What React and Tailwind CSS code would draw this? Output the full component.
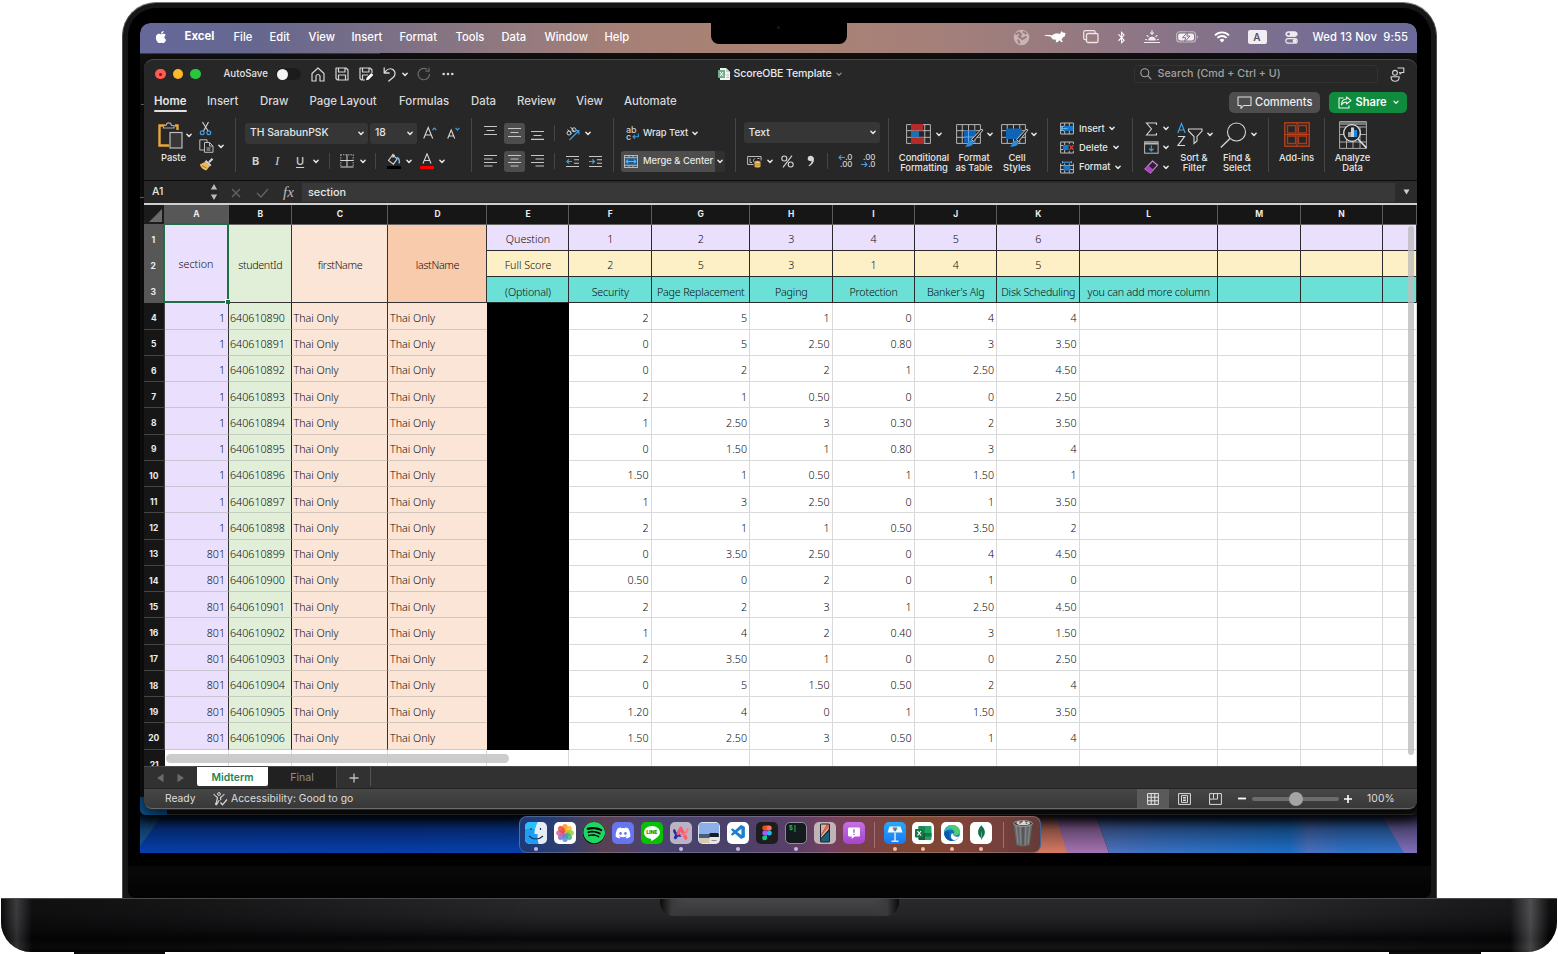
import React from "react";
import { FaApple, FaSpotify, FaDiscord, FaBluetoothB } from "react-icons/fa";
import { SiMongodb } from "react-icons/si";
import { VscVscode } from "react-icons/vsc";

const W = "#d6d6d6";
const B = "#3f9fe0";

function Svg({ w, h, children, className = "" }) {
  return (
    <svg width={w} height={h} viewBox={`0 0 ${w} ${h}`} fill="none" className={"block shrink-0 " + className}>
      {children}
    </svg>
  );
}

function Chev({ className = "", color = "#e4e4e4", s = 1.5 }) {
  return (
    <Svg w={6} h={5} className={className}>
      <path d="M.9 1.2 3 3.4 5.1 1.2" stroke={color} strokeWidth={s} strokeLinecap="round" strokeLinejoin="round" />
    </Svg>
  );
}

const Sep = () => <div className="h-[54px] w-px shrink-0 self-start bg-[#464646]" />;
const MiniSep = ({ className = "" }) => <div className={"h-[16px] w-px shrink-0 bg-[#464646] " + className} />;

/* ---------------- menu bar ---------------- */

function MenuBar() {
  return (
    <div className="flex h-[30px] shrink-0 items-center whitespace-nowrap rounded-t-[10px] bg-[linear-gradient(90deg,#65689a_0%,#66678f_9%,#7c7085_20%,#957a7e_30%,#a68076_38%,#ab8274_50%,#a58079_62%,#977a80_72%,#84728a_84%,#706c97_95%,#6b6a9a_100%)] pb-[2px] text-[11.2px] font-medium text-white">
      <FaApple className="ml-[14px] shrink-0" size={14} />
      <span className="ml-[16.500px] w-[49px] text-[11.4px] font-bold">Excel</span>
      <span className="w-[36px]">File</span>
      <span className="w-[39px]">Edit</span>
      <span className="w-[43px]">View</span>
      <span className="w-[48px]">Insert</span>
      <span className="w-[56px]">Format</span>
      <span className="w-[46px]">Tools</span>
      <span className="w-[43px]">Data</span>
      <span className="w-[60px]">Window</span>
      <span className="w-[60px]">Help</span>
      <div className="flex-1" />
      <Svg w={17} h={17}>
        <circle cx="8.5" cy="8.5" r="7.8" fill="#c9b3b3" />
        <path d="M2.500 5.500 6 3.500l2 2-2 2 3.500 2.500 4-2.500M10 2.500l3.500 2.500M5 10.500l1.500 4" stroke="#997a7c" strokeWidth="2" />
      </Svg>
      <Svg w={22} h={14} className="ml-[14px]">
        <path d="M0 5.200c3 .2 5-.6 8 .4 2-2 5-2.400 8-1.600L17.500 1l1.200 1.600L21.500 3l-.6 3.200-2.400 1.500-1 2.300 1.500 1.600-1.600.6-1.800-2-2.600 2.400-1.400-.8.8-2-3-.4C8 9.500 7.700 7.500 6.500 6.600 4 6 2 6.400 0 5.200z" fill="#fff" />
      </Svg>
      <Svg w={16} h={14} className="ml-[17px]">
        <rect x=".7" y=".7" width="11.500" height="9" rx="1.600" stroke="#efe6e8" strokeWidth="1.200" />
        <rect x="3.500" y="3.500" width="11.500" height="9" rx="1.600" fill="#9a7b80" stroke="#efe6e8" strokeWidth="1.300" />
      </Svg>
      <FaBluetoothB className="ml-[16px] shrink-0" size={13} />
      <Svg w={16} h={14} className="ml-[16px]">
        <path d="M.5 12.500h15M8 .5v3.500M6.600 2.800 8 4.200l1.400-1.400M1.500 9.500l1.300.3M14.500 9.500l-1.300.3M3 5.500l1.200 1M13 5.500l-1.200 1" stroke="#f2ebee" strokeWidth="1.100" strokeLinecap="round" />
        <path d="M4.200 10.500a3.800 3.800 0 0 1 7.600 0z" fill="#f2ebee" />
      </Svg>
      <Svg w={23} h={12} className="ml-[16px]">
        <rect x=".6" y=".8" width="19" height="10.200" rx="3" stroke="#c5bac4" strokeWidth="1.100" />
        <rect x="2.200" y="2.400" width="15.800" height="7" rx="1.800" fill="#f4eff2" />
        <path d="M21 4.200v3.400c1.300-.5 1.300-2.900 0-3.400z" fill="#c5bac4" />
        <path d="M12 .8 6.500 6.700h3.200L8.500 11l5.500-6h-3.200z" fill="#f4eff2" stroke="#86738a" strokeWidth="1" />
      </Svg>
      <Svg w={16} h={12} className="ml-[15px]">
        <path d="M1 4.300a10 10 0 0 1 14 0M3.400 6.900a6.500 6.500 0 0 1 9.200 0" stroke="#fff" strokeWidth="1.800" />
        <path d="M8 11.400 5.600 9a3.400 3.400 0 0 1 4.800 0z" fill="#fff" />
      </Svg>
      <div className="ml-[18px] flex h-[14px] w-[19px] items-center justify-center rounded-[2px] bg-[#f1edf2] text-[10px] font-semibold text-[#5c5068]">A</div>
      <Svg w={13} h={13} className="ml-[18px]">
        <rect x=".8" y=".8" width="11.400" height="4.600" rx="2.300" fill="#efeaf0" stroke="#efeaf0" />
        <circle cx="3.600" cy="3.100" r="1.400" fill="#77708f" />
        <rect x=".8" y="7.600" width="11.400" height="4.600" rx="2.300" stroke="#efeaf0" strokeWidth="1.200" />
        <circle cx="9.600" cy="9.900" r="2" fill="#efeaf0" />
      </Svg>
      <span className="ml-[15px] w-[104.500px] text-[11.2px] tracking-[0.14px]">Wed 13 Nov&nbsp; 9:55</span>
    </div>
  );
}

/* ---------------- title bar ---------------- */

function TitleBar() {
  return (
    <div className="flex h-[28px] shrink-0 items-center whitespace-nowrap text-[#e4e4e4]">
      <div className="ml-[11px] flex gap-[7px]">
        <div className="flex size-[10.500px] items-center justify-center rounded-full bg-[#ff5b55]">
          <div className="size-[3px] rounded-full bg-[#8f100c]" />
        </div>
        <div className="size-[10.500px] rounded-full bg-[#fdb92b]" />
        <div className="size-[10.500px] rounded-full bg-[#29c73f]" />
      </div>
      <span className="ml-[23px] w-[52px] text-[9.700px] font-medium">AutoSave</span>
      <div className="flex h-[12px] w-[25px] items-center rounded-full bg-[#1c1c1c] px-[1px]">
        <div className="size-[11px] rounded-full bg-[#f4f4f4]" />
      </div>
      <Svg w={14} h={15} className="ml-[10px]">
        <path d="M1 6.500 7 1l6 5.500V14H9V9.500a2 2 0 0 0-4 0V14H1z" stroke={W} strokeWidth="1.200" strokeLinejoin="round" />
      </Svg>
      <Svg w={14} h={14} className="ml-[10px]">
        <path d="M1 1h10l2 2v10H2.500L1 11.500zM3.500 1v4h6.500V1M3.500 13V8h7v5" stroke={W} strokeWidth="1.200" strokeLinejoin="round" />
      </Svg>
      <Svg w={15} h={14} className="ml-[10px]">
        <path d="M6 13H2.500L1 11.500V1h10l2 2v3M3.500 1v4H10V1M3.500 13V8H9" stroke={W} strokeWidth="1.200" strokeLinejoin="round" />
        <path d="m7 13.300.6-2.600L12.300 6l2 2-4.700 4.700z" fill="#fff" />
      </Svg>
      <Svg w={13} h={15} className="ml-[9px]">
        <path d="M1.200 1v5h5M1.500 5.800C3.500 2.500 7 .8 10 2.600c3 2 2.400 5.600.3 7.600L5.800 14" stroke={W} strokeWidth="1.300" strokeLinecap="round" strokeLinejoin="round" />
      </Svg>
      <Chev className="ml-[6px]" />
      <Svg w={14} h={14} className="ml-[9px]">
        <path d="M12.500 7A5.700 5.700 0 1 1 10 2.300M12 .8v3.400H8.500" stroke="#6c6c6c" strokeWidth="1.200" />
      </Svg>
      <Svg w={12} h={4} className="ml-[11px]">
        <circle cx="1.700" cy="2" r="1.300" fill={W} /><circle cx="6" cy="2" r="1.300" fill={W} /><circle cx="10.300" cy="2" r="1.300" fill={W} />
      </Svg>
      <Svg w={12} h={14} className="ml-[264px]">
        <path d="M2 1h6l4 4v8H2z" fill="#f2f4f2" />
        <path d="M8 1v4h4z" fill="#c9d4cc" />
        <rect x="0" y="3" width="7" height="8" rx=".8" fill="#6fae88" />
        <path d="m2 5 3 4M5 5 2 9" stroke="#fff" strokeWidth="1" />
        <path d="M8.500 8h2.500M8.500 10.500h2.500" stroke="#9cc7ac" />
      </Svg>
      <span className="ml-[4px] w-[101px] text-[10.600px] font-medium tracking-[-0.140px] text-[#e8e8e8]">ScoreOBE Template</span>
      <Chev color="#9a9a9a" s={1.1} className="ml-[1px]" />
      <div className="ml-[292px] flex h-[18px] w-[244px] items-center rounded-[4px] border border-[#333] pl-[5px]">
        <Svg w={12} h={12}>
          <circle cx="4.800" cy="4.800" r="4" stroke="#a5a5a5" strokeWidth="1.100" /><path d="m7.700 7.700 3.600 3.600" stroke="#a5a5a5" strokeWidth="1.200" />
        </Svg>
        <span className="ml-[6px] mt-[1px] text-[10.700px] font-medium tracking-[0.03px] text-[#a2a2a2]">Search (Cmd + Ctrl + U)</span>
      </div>
      <Svg w={15} h={15} className="ml-[12px]">
        <circle cx="5" cy="5.800" r="2.400" stroke={W} strokeWidth="1.100" />
        <path d="M1 9.800h8.200c0 6-8.200 6-8.200 0zM7.500 1h6.300v4.500h-2.300L10 7V5.500H9" stroke={W} strokeWidth="1.100" strokeLinejoin="round" />
      </Svg>
    </div>
  );
}

function RibbonTabs() {
  return (
    <div className="flex h-[28px] shrink-0 items-center whitespace-nowrap text-[11.400px] font-medium text-[#d8d8d8]">
      <div className="ml-[10px] flex h-full w-[53px] flex-col items-start">
        <span className="mt-[4px] h-[18px] leading-[18px] font-semibold text-[#e6e6e6]">Home</span>
        <div className="h-[2px] w-[33px] rounded-full bg-[#e0e0e0]" />
      </div>
      <div className="flex h-full items-start pt-[4px] leading-[18px]">
        <span className="w-[53px]">Insert</span>
        <span className="w-[49.500px]">Draw</span>
        <span className="w-[89.500px]">Page Layout</span>
        <span className="w-[72px]">Formulas</span>
        <span className="w-[46px]">Data</span>
        <span className="w-[59px]">Review</span>
        <span className="w-[48px]">View</span>
        <span className="w-[100px]">Automate</span>
      </div>
      <div className="ml-[504.500px] mt-[1px] flex h-[21px] w-[91px] items-center rounded-[5px] bg-[#4e4e4e] pl-[8px] text-[11.100px] text-[#f0f0f0]">
        <Svg w={15} h={14}>
          <path d="M1 1h13v8.500H6.500L4 12.500v-3H1z" stroke="#ddd" strokeWidth="1.100" strokeLinejoin="round" />
        </Svg>
        <span className="ml-[3.500px]">Comments</span>
      </div>
      <div className="ml-[9px] mt-[1px] flex h-[21px] w-[78px] items-center rounded-[5px] bg-[#108a3d] pl-[9px] text-[11.100px] font-semibold text-white">
        <Svg w={14} h={13}>
          <path d="M5.500 2H1v10h10V9.500M8.500 1l4.500 3.500L8.500 8V6C6 6 4.500 7 3.500 9 3.500 5.500 5 3.300 8.500 3z" stroke="#e8f6ec" strokeWidth="1.100" strokeLinejoin="round" />
        </Svg>
        <span className="ml-[4px] w-[37px]">Share</span>
        <Chev s={1.1} color="#fff" />
      </div>
    </div>
  );
}

/* ---------------- ribbon ---------------- */

function Lines({ rows }) {
  return (
    <Svg w={14} h={14}>
      {rows.map(([x1, x2, y], i) => (
        <path key={i} d={`M${x1} ${y}H${x2}`} stroke="#c6c6c6" strokeWidth="1.100" />
      ))}
    </Svg>
  );
}

const GridBase = ({ w = 25, h = 20 }) => (
  <path d={`M.6.6h${w - 1.2}v${h - 1.2}H.6zM.6 ${h / 3}h${w - 1.2}M.6 ${(h * 2) / 3}h${w - 1.2}M${w / 4} .6v${h - 1.2}M${w / 2} .6v${h - 1.2}M${(w * 3) / 4} .6v${h - 1.2}`} stroke="#b4b4b4" strokeWidth="1" />
);

const Brush = () => (
  <g>
    <path d="m27 6-9.500 11.500-2-2L25 5.300z" fill="#272727" stroke="#c8c8c8" strokeWidth="1" />
    <path d="M15.500 16.500c2 .6 2.300 2.500 1.200 4-1.500 2-5 2.600-8.200 1.800 2-.8 2.300-1.500 3-3.300.6-1.600 2-3 4-2.500z" fill="#2a8fdc" />
  </g>
);

function TableGlyph({ kind }) {
  return (
    <Svg w={14} h={13}>
      <path d="M.6 1h12.800v11H.6zM.6 4.500h12.800M.6 8.500h12.800M4.700 1v11M9.300 1v11" stroke="#b9b9b9" strokeWidth="1" />
      {kind === "insert" && <g><rect x="4" y="4" width="9" height="5" fill="#1877c9" /><path d="M7.500 6.500h-6M3.800 4 1.200 6.500 3.800 9" stroke="#5db7f2" strokeWidth="1.200" /></g>}
      {kind === "delete" && <g><rect x="3" y="4" width="6" height="5" fill="#1877c9" /><rect x="8.500" y="3" width="5.500" height="7" fill="#272727" /><path d="m9.500 4.200 4 4.600M13.500 4.200l-4 4.600" stroke="#e0443e" strokeWidth="1.200" /></g>}
      {kind === "format" && <g><rect x="0" y="0" width="14" height="2.500" fill="#272727" /><rect x="3.500" y="4.500" width="7" height="5" fill="#1877c9" /><path d="M2 1.200h10M2.500 0v2.400M11.500 0v2.400" stroke="#4aa9ea" /></g>}
    </Svg>
  );
}

const CellRow = ({ kind, children, width }) => (
  <div className="flex h-[19.300px] items-center">
    <TableGlyph kind={kind} />
    <span className={"ml-[5px] " + width}>{children}</span>
    <Chev />
  </div>
);

function Ribbon() {
  return (
    <div className="flex h-[64px] shrink-0 items-start whitespace-nowrap pt-[2px] text-[9.400px] font-medium text-[#e6e6e6]">
      {/* clipboard */}
      <div className="flex h-[56px] w-[91px] shrink-0">
        <div className="ml-[14px] mt-[4px] w-[40px]">
          <div className="flex items-center">
            <Svg w={25} h={27}>
              <path d="M7 3.500H1.500v20H11M17 3.500h2.500V8" stroke="#e9a63c" strokeWidth="2.400" />
              <path d="M5.500 6V3.500h2.500c.5-3.500 5-3.500 5.500 0H16V6z" stroke="#a9a9a9" strokeWidth="1.200" fill="#272727" />
              <rect x="12" y="10.500" width="12" height="15.500" fill="#373737" stroke="#bdbdbd" strokeWidth="1.200" />
            </Svg>
            <Chev className="ml-[3px] mt-[-1px]" />
          </div>
          <div className="mt-[3px] w-[31px] text-center leading-[12px]">Paste</div>
        </div>
        <div className="ml-[1px] mt-[1px] flex flex-col">
          <div className="flex h-[19px] items-center">
            <Svg w={14} h={15}>
              <path d="M3.500 1 9 10M9.500 1 4.500 10" stroke={W} strokeWidth="1.100" />
              <circle cx="3.200" cy="11.800" r="1.900" stroke={B} strokeWidth="1.200" /><circle cx="9.800" cy="11.800" r="1.900" stroke={B} strokeWidth="1.200" />
            </Svg>
          </div>
          <div className="flex h-[19px] items-center">
            <Svg w={15} h={14}>
              <path d="M5 11H.8V.8H5l3 0V3M5.500 3.500h5L14 7v6.300H5.500zM10.500 3.500V7H14M7.500 9h4M7.500 11h4" stroke="#bdbdbd" strokeWidth="1" />
            </Svg>
            <Chev className="ml-[4px]" />
          </div>
          <div className="flex h-[19px] items-center">
            <Svg w={15} h={13}>
              <path d="M13.500.8 10 4.200M6.500 2.800l5.200 5" stroke={W} strokeWidth="2" />
              <path d="M6.300 3.800.8 6.500c1 3 3.500 5.500 6.500 6L10.800 8z" fill="#eeb85a" />
              <path d="m3 7.500 4.500 2.500" stroke="#8a6420" strokeWidth=".8" />
            </Svg>
          </div>
        </div>
      </div>
      <Sep />
      {/* font */}
      <div className="flex h-[56px] w-[235px] shrink-0 flex-col pl-[9px]">
        <div className="mt-[4px] flex h-[22px] items-center text-[10.300px]">
          <div className="flex h-[21px] w-[123px] items-center rounded-[3px] bg-[#363636] pl-[5px]">
            <span className="w-[108px]">TH SarabunPSK</span>
            <Chev />
          </div>
          <div className="ml-[2px] flex h-[21px] w-[47px] items-center rounded-[3px] bg-[#363636] pl-[5px]">
            <span className="w-[32px]">18</span>
            <Chev />
          </div>
          <Svg w={14} h={14} className="ml-[6px]">
            <path d="M.7 12.500 5.200 1.500l4.500 11M2.200 9h6" stroke={W} strokeWidth="1.100" />
            <path d="m9.500 4 1.900-2 1.900 2" stroke={B} strokeWidth="1.100" />
          </Svg>
          <Svg w={14} h={14} className="ml-[10px]">
            <path d="M.7 12.500 4.200 4l3.500 8.500M2 10h4.500" stroke={W} strokeWidth="1.100" />
            <path d="m8.500 2 1.900 2 1.900-2" stroke={B} strokeWidth="1.100" />
          </Svg>
        </div>
        <div className="mt-[6px] flex h-[22px] items-center text-[11px] text-[#cfcfcf]">
          <span className="ml-[7px] w-[22px] font-bold">B</span>
          <span className="w-[22px] pl-[1px] font-['Liberation_Serif',serif] text-[13px] italic">I</span>
          <span className="w-[15px] underline underline-offset-2">U</span>
          <Chev className="ml-[2px]" />
          <MiniSep className="ml-[10px]" />
          <Svg w={14} h={14} className="ml-[10px]">
            <path d="M.8.5v12M13.200.5v12M.5.8h13" stroke="#aaa" strokeDasharray="1.500 1" />
            <path d="M7 .5v12M.5 6.500h13M.5 13h13" stroke={W} />
          </Svg>
          <Chev className="ml-[6px]" />
          <MiniSep className="ml-[9px]" />
          <Svg w={14} h={16} className="ml-[11px]">
            <path d="M5.500 2 1.500 7.500l4.800 3.700 4-5.400zM5.500 2l2.500.3M6 .8v4" stroke={W} strokeWidth="1.100" />
            <path d="M10 4.500c2 .5 2.600 3 2.200 6" stroke="#6bb5ea" strokeWidth="1.600" />
            <rect x="0" y="13" width="14" height="3" fill="#000" />
          </Svg>
          <Chev className="ml-[5px]" />
          <Svg w={14} h={16} className="ml-[8px]">
            <path d="m3 10.500 4-9.700 4 9.700M4.300 7.500h5.500" stroke={W} strokeWidth="1.100" />
            <rect x="0" y="13" width="14" height="3" fill="#f60000" />
          </Svg>
          <Chev className="ml-[5px]" />
        </div>
      </div>
      <Sep />
      {/* alignment */}
      <div className="flex h-[56px] w-[141px] shrink-0 flex-col pl-[12px]">
        <div className="mt-[4px] flex h-[22px] items-center">
          <Lines rows={[[0, 13, 0.5], [2.5, 10.5, 4.5], [0, 13, 8.5]]} />
          <div className="ml-[6px] flex h-[21px] w-[21px] items-center justify-center rounded-[3px] bg-[#4d4d4d]"><Lines rows={[[0, 13, 2.5], [2.5, 10.5, 6.5], [0, 13, 10.5]]} /></div>
          <span className="ml-[6px]"><Lines rows={[[0, 13, 5.5], [2.5, 10.5, 9.5], [0, 13, 13.400]]} /></span>
          <MiniSep className="ml-[9px]" />
          <Svg w={16} h={15} className="ml-[10px]">
            <g stroke={W} strokeWidth="1"><circle cx="4" cy="7" r="2" /><path d="m2.500 3.500 4 4M5.500 1l4 4.500" /><circle cx="9" cy="3.800" r="2" /></g>
            <path d="m4.500 14 9-9M9.800 4.600h4v4" stroke={B} strokeWidth="1.200" />
          </Svg>
          <Chev className="ml-[4px]" />
        </div>
        <div className="mt-[6px] flex h-[22px] items-center">
          <Lines rows={[[0, 13, 1.5], [0, 8.5, 5], [0, 13, 8.5], [0, 8.5, 12]]} />
          <div className="ml-[6px] flex h-[21px] w-[21px] items-center justify-center rounded-[3px] bg-[#4d4d4d]"><Lines rows={[[0, 13, 1.5], [2.5, 10.5, 5], [0, 13, 8.5], [2.5, 10.5, 12]]} /></div>
          <span className="ml-[6px]"><Lines rows={[[0, 13, 1.5], [4.5, 13, 5], [0, 13, 8.5], [4.5, 13, 12]]} /></span>
          <MiniSep className="ml-[9px]" />
          <Svg w={14} h={13} className="ml-[11px]">
            <path d="M0 1.500h13M8 4.800h5M8 8.200h5M0 11.500h13" stroke="#c6c6c6" strokeWidth="1.100" />
            <path d="M6 6.500H.8M3 4.300.8 6.500 3 8.700" stroke={B} strokeWidth="1.200" />
          </Svg>
          <Svg w={14} h={13} className="ml-[9px]">
            <path d="M0 1.500h13M8 4.800h5M8 8.200h5M0 11.500h13" stroke="#c6c6c6" strokeWidth="1.100" />
            <path d="M0 6.500h5.500M3.300 4.300l2.200 2.200-2.200 2.200" stroke={B} strokeWidth="1.200" />
          </Svg>
        </div>
      </div>
      <Sep />
      {/* wrap, merge */}
      <div className="flex h-[56px] w-[121px] shrink-0 flex-col pl-[7px]">
        <div className="mt-[4px] flex h-[22px] items-center">
          <div className="ml-[5px] flex w-[13px] flex-col text-[9px] text-[#cfcfcf]">
            <span className="h-[7px] leading-[7px]">ab</span>
            <span className="flex h-[8px] items-center leading-[7px]">c
              <Svg w={7} h={7} className="ml-[1px]"><path d="M6.300.5v3.300H1M3 1.800 1 3.800l2 2" stroke={B} strokeWidth="1.100" /></Svg>
            </span>
          </div>
          <span className="ml-[4px] w-[49px] tracking-[-0.05px]">Wrap Text</span>
          <Chev />
        </div>
        <div className="mt-[6px] flex h-[22px] items-center">
          <div className="flex h-[21px] w-[94px] items-center rounded-l-[3px] bg-[#4d4d4d] pl-[3px]">
            <Svg w={14} h={13}>
              <rect x=".5" y=".5" width="13" height="12" stroke="#b9b9b9" /><rect x="1" y="3" width="12" height="7" fill="#1d5d92" />
              <path d="M1 2.700h12M1 10.300h12M5 .5v2M9 .5v2M5 10.500v2M9 10.500v2" stroke="#b9b9b9" />
              <path d="M2 6.500h10M4 4.700 2.200 6.500 4 8.300M10 4.700l1.800 1.800L10 8.300" stroke="#5cb4f2" strokeWidth="1.100" />
            </Svg>
            <span className="ml-[5px]">Merge &amp; Center</span>
          </div>
          <div className="flex h-[21px] w-[10px] items-center justify-center rounded-r-[3px] bg-[#303030]"><Chev /></div>
        </div>
      </div>
      <Sep />
      {/* number */}
      <div className="flex h-[56px] w-[152px] shrink-0 flex-col pl-[7.500px]">
        <div className="mt-[4px] flex h-[21px] w-[136px] items-center rounded-[3px] bg-[#363636] pl-[5px] text-[10.300px]">
          <span className="w-[121px]">Text</span>
          <Chev />
        </div>
        <div className="mt-[7px] flex h-[22px] items-center">
          <Svg w={15} h={13} className="ml-[3px]">
            <path d="M.6 1.500h13.500v4M.6 1.500v8h6M3 3.500v4h2M8 3.500c-2 .5-2 3.500 0 4M10.500 3.500h2" stroke="#bdbdbd" />
            <path d="M7.500 7.200v4.300c0 1.300 6 1.300 6 0V7.200" fill="#eeb85a" /><ellipse cx="10.500" cy="7.200" rx="3" ry="1.300" fill="#f4cf86" stroke="#8a6420" strokeWidth=".5" /><path d="M7.500 9.500c.5 1 5.500 1 6 0" stroke="#8a6420" strokeWidth=".7" />
          </Svg>
          <Chev className="ml-[5px]" />
          <Svg w={13} h={13} className="ml-[8px]">
            <circle cx="3.300" cy="3.500" r="2.500" stroke={W} strokeWidth="1.100" /><circle cx="9.700" cy="9.500" r="2.500" stroke={W} strokeWidth="1.100" /><path d="M11 .6 2 12.400" stroke={W} strokeWidth="1.100" />
          </Svg>
          <Svg w={8} h={12} className="ml-[13px]">
            <path d="M3.500.8A2.700 2.700 0 0 0 3.200 6.200c.6 0 1-.1 1.500-.4-.3 2-1.400 3.500-3.200 4.600l.7.900C5 10 7 7.500 7 4.500 7 2 5.600.8 3.500.8z" fill={W} />
          </Svg>
          <MiniSep className="ml-[12px]" />
          <div className="ml-[11px] flex w-[14px] flex-col items-end text-[8px] leading-[7.500px] text-[#cfcfcf]">
            <span className="flex items-center"><Svg w={7} h={7}><path d="M7 3.500H1M3.300 1.200 1 3.500l2.300 2.300" stroke={B} strokeWidth="1.100" /></Svg>.0</span>
            <span>.00</span>
          </div>
          <div className="ml-[9px] flex w-[14px] flex-col items-end text-[8px] leading-[7.500px] text-[#cfcfcf]">
            <span>.00</span>
            <span className="flex items-center"><Svg w={7} h={7}><path d="M0 3.500h6M3.700 1.200 6 3.500 3.700 5.800" stroke={B} strokeWidth="1.100" /></Svg>.0</span>
          </div>
        </div>
      </div>
      <Sep />
      {/* styles */}
      <div className="flex h-[60px] w-[158px] shrink-0 text-center leading-[10.500px]">
        <div className="ml-[8px] mt-[6px] w-[54px]">
          <div className="flex h-[28.500px] items-start pl-[9px]">
            <Svg w={25} h={20}>
              <GridBase />
              <rect x="5" y="0" width="12" height="6.500" fill="#b22a2a" /><rect x="5" y="7" width="8" height="6" fill="#1e6fb0" /><rect x="5" y="13.500" width="13" height="6.500" fill="#b22a2a" />
            </Svg>
            <Chev className="ml-[5px] mt-[8px]" />
          </div>
          <div className="-mx-[4px] tracking-[-0.05px]">Conditional<br />Formatting</div>
        </div>
        <div className="mt-[6px] w-[46px]">
          <div className="flex h-[28.500px] items-start pl-[5px]">
            <Svg w={28} h={24}><GridBase /><rect x="8" y="6.500" width="12" height="12" fill="#0f64b8" /><path d="M12.500 6.500v12M8 13h12" stroke="#79b8ec" strokeWidth=".8" /><Brush /></Svg>
            <Chev className="ml-[3px] mt-[8px]" />
          </div>
          <div className="tracking-[-0.05px]">Format<br />as Table</div>
        </div>
        <div className="ml-[1px] mt-[6px] w-[38px]">
          <div className="flex h-[28.500px] items-start pl-[3px]">
            <Svg w={28} h={24}><GridBase /><rect x="5" y="4.500" width="16" height="10.500" fill="#0f64b8" /><Brush /></Svg>
            <Chev className="ml-[2px] mt-[8px]" />
          </div>
          <div>Cell<br />Styles</div>
        </div>
      </div>
      <Sep />
      {/* cells */}
      <div className="flex h-[60px] w-[84px] shrink-0 flex-col pl-[12px] pt-[1px]">
        <CellRow kind="insert" width="w-[30px]">Insert</CellRow>
        <CellRow kind="delete" width="w-[34px]">Delete</CellRow>
        <CellRow kind="format" width="w-[36px]">Format</CellRow>
      </div>
      <Sep />
      {/* editing */}
      <div className="flex h-[60px] w-[135px] shrink-0">
        <div className="flex w-[38px] flex-col pl-[11px] pt-[1px]">
          <div className="flex h-[19.300px] items-center">
            <Svg w={15} h={14}><path d="M12.500 3V1H2.500l5 6-5 6h10v-2" stroke={W} strokeWidth="1.100" /></Svg>
            <Chev className="ml-[4px]" />
          </div>
          <div className="flex h-[19.300px] items-center">
            <Svg w={15} h={13}><rect x=".6" y=".8" width="13.500" height="11.400" stroke="#b9b9b9" /><path d="M1 2.500h13" stroke="#b9b9b9" strokeWidth="2" /><path d="M7.300 4.500v5.500M5 7.700l2.300 2.300 2.300-2.300" stroke={B} strokeWidth="1.200" /></Svg>
            <Chev className="ml-[4px]" />
          </div>
          <div className="flex h-[19.300px] items-center">
            <Svg w={15} h={14}><path d="M8.500 1 13.500 5l-7 8-5.500-4z" stroke="#d28ce0" strokeWidth="1.100" /><path d="m4 5.500 5.500 4-3 3.500L1 9z" fill="#b03fc4" /></Svg>
            <Chev className="ml-[4px]" />
          </div>
        </div>
        <div className="ml-[4px] mt-[4px] w-[40px] text-center leading-[10.500px]">
          <div className="flex h-[30.500px] items-start pl-[2px]">
            <Svg w={26} h={26}>
              <path d="M.8 11 4.500 1.500 8.200 11M2 8h5" stroke={B} strokeWidth="1.200" />
              <path d="M1 14.500h6.500L1 23.500h7" stroke={W} strokeWidth="1.200" />
              <path d="M11.500 7h13.500v2L20 14.500V19l-3 2.500v-7L11.500 9z" stroke={W} strokeWidth="1.100" />
            </Svg>
            <Chev className="ml-[4px] mt-[10px]" />
          </div>
          <div className="pr-[2px]">Sort &amp;<br />Filter</div>
        </div>
        <div className="ml-[4px] mt-[4px] w-[42px] text-center leading-[10.500px]">
          <div className="flex h-[30.500px] items-start pl-[1px]">
            <Svg w={27} h={26}><circle cx="16.500" cy="10" r="9" stroke={W} strokeWidth="1.100" /><path d="M10 16.500.8 25.500" stroke={W} strokeWidth="1.300" /></Svg>
            <Chev className="ml-[4px] mt-[10px]" />
          </div>
          <div className="pr-[6px]">Find &amp;<br />Select</div>
        </div>
      </div>
      <Sep />
      <div className="mt-[4px] flex h-[52px] w-[55px] shrink-0 flex-col items-center leading-[10.500px]">
        <Svg w={26} h={25}>
          <rect x=".8" y=".8" width="24.400" height="23.400" stroke="#c2421a" strokeWidth="1.300" />
          <path d="M3.500 3.500h8v7.500h-8zM14.500 3.500h8v7.500h-8zM3.500 14h8v7.500h-8zM14.500 14h8v7.500h-8z" stroke="#a83b1b" strokeWidth="1.300" />
          <path d="M13 1v23M1 12.500h24" stroke="#c2421a" strokeWidth="1" />
        </Svg>
        <div className="mt-[6px] tracking-[-0.1px]">Add-ins</div>
      </div>
      <Sep />
      <div className="mt-[3px] flex h-[52px] w-[55px] shrink-0 flex-col items-center text-center leading-[10.500px]">
        <Svg w={28} h={28}>
          <path d="M.6.6h26.800v26.800H.6zM.6 6h26.800M.6 13.500h26.800M.6 21h26.800M7.500 6v21M14 6v21M21 6v21" stroke="#aaa" strokeWidth="1" />
          <rect x="1" y="1" width="26" height="3" fill="#777" />
          <circle cx="13" cy="12" r="8.300" fill="#242424" stroke="#dedede" strokeWidth="1.300" />
          <path d="m19 18 8.500 9" stroke="#dedede" strokeWidth="1.600" />
          <rect x="9" y="11" width="3" height="5" fill="#9a9a9a" /><rect x="12" y="6.500" width="3" height="9.500" fill="#d0d0d0" /><rect x="15" y="9" width="3" height="7" fill="#1b87dc" />
        </Svg>
        <div className="mt-[3.500px] tracking-[-0.1px]">Analyze<br />Data</div>
      </div>
    </div>
  );
}

function FormulaBar() {
  return (
    <div className="flex h-[25px] shrink-0 items-center whitespace-nowrap border-b-2 border-t border-b-[#cfcfcf] border-t-[#0c0c0c] bg-[#2b2b2b] text-[10.900px] font-medium text-[#e6e6e6]">
      <div className="flex h-full w-[75px] items-center bg-[#262626] pl-[8px]">
        <span className="w-[58px] text-[10.500px]">A1</span>
        <Svg w={8} h={18}><path d="M4 1 7.200 6.500H.8zM4 17 .8 11.500h6.400z" fill="#b9b9b9" /></Svg>
      </div>
      <Svg w={10} h={10} className="ml-[12px] mt-[2px]"><path d="m1 1 8 8M9 1 1 9" stroke="#606060" strokeWidth="1.500" /></Svg>
      <Svg w={13} h={10} className="ml-[15px] mt-[2px]"><path d="m1 5 4 4 7-8" stroke="#606060" strokeWidth="1.500" /></Svg>
      <span className="ml-[14px] w-[19px] font-['Liberation_Serif',serif] text-[15px] italic text-[#bdbdbd]">fx</span>
      <div className="flex h-[19px] flex-1 items-center bg-[#383838] pl-[6px]">section</div>
      <div className="flex w-[22px] justify-center"><Svg w={7} h={6}><path d="M.5.5h6l-3 5z" fill="#cfcfcf" /></Svg></div>
    </div>
  );
}

/* ---------------- sheet ---------------- */

const COLS = "grid-cols-[20.500px_64px_63.500px_96px_99px_82px_82.500px_98.500px_82.500px_82px_82.500px_82.500px_138.500px_82.500px_82px_34px]";
const LETTERS = ["A", "B", "C", "D", "E", "F", "G", "H", "I", "J", "K", "L", "M", "N", ""];

const DATA = [
  ["1", "640610890", "2", "5", "1", "0", "4", "4"],
  ["1", "640610891", "0", "5", "2.50", "0.80", "3", "3.50"],
  ["1", "640610892", "0", "2", "2", "1", "2.50", "4.50"],
  ["1", "640610893", "2", "1", "0.50", "0", "0", "2.50"],
  ["1", "640610894", "1", "2.50", "3", "0.30", "2", "3.50"],
  ["1", "640610895", "0", "1.50", "1", "0.80", "3", "4"],
  ["1", "640610896", "1.50", "1", "0.50", "1", "1.50", "1"],
  ["1", "640610897", "1", "3", "2.50", "0", "1", "3.50"],
  ["1", "640610898", "2", "1", "1", "0.50", "3.50", "2"],
  ["801", "640610899", "0", "3.50", "2.50", "0", "4", "4.50"],
  ["801", "640610900", "0.50", "0", "2", "0", "1", "0"],
  ["801", "640610901", "2", "2", "3", "1", "2.50", "4.50"],
  ["801", "640610902", "1", "4", "2", "0.40", "3", "1.50"],
  ["801", "640610903", "2", "3.50", "1", "0", "0", "2.50"],
  ["801", "640610904", "0", "5", "1.50", "0.50", "2", "4"],
  ["801", "640610905", "1.20", "4", "0", "1", "1.50", "3.50"],
  ["801", "640610906", "1.50", "2.50", "3", "0.50", "1", "4"],
];

const HEAD = [
  { bg: "bg-[#ebdffe]", cells: ["Question", "1", "2", "3", "4", "5", "6", "", "", "", ""] },
  { bg: "bg-[#fef0c6]", cells: ["Full Score", "2", "5", "3", "1", "4", "5", "", "", "", ""] },
  { bg: "bg-[#6be0d6] tracking-[-0.180px]", cells: ["(Optional)", "Security", "Page Replacement", "Paging", "Protection", "Banker's Alg", "Disk Scheduling", "you can add more column", "", "", ""] },
];

const rowHead = "flex items-center justify-center font-['Inter',sans-serif] text-[8.500px] font-bold text-[#ececec] pt-[5px]";

function Sheet() {
  return (
    <div className="relative h-[561px] shrink-0 overflow-hidden bg-white font-['Noto_Sans',sans-serif] text-[10.700px] font-light text-[#0c0c0c]">
      <div className={"grid h-[19.500px] " + COLS}>
        <div className="flex items-end justify-end border-r border-b border-[#555] bg-[#1b1b1b] p-[2px]">
          <Svg w={13} h={13}><path d="M13 0v13H0z" fill="#6a6a6a" /></Svg>
        </div>
        {LETTERS.map((l, i) => (
          <div key={i} className={"flex items-center justify-center border-r border-[#5a5a5a] pl-[1px] pt-px font-['Inter',sans-serif] text-[8.500px] font-bold text-[#ececec] " + (i === 0 ? "bg-[#575757] border-b-2 border-b-[#1d7044]" : "bg-[#161616] border-b border-b-[#666]")}>{l}</div>
        ))}
      </div>
      <div className={"grid grid-rows-[26.250px_26.250px_26.250px] whitespace-nowrap " + COLS}>
        <div className="row-span-3 grid grid-rows-3 border-r-2 border-[#1d7044] bg-[#575757]">
          <div className={rowHead}>1</div><div className={rowHead}>2</div><div className={rowHead}>3</div>
        </div>
        <div className="relative row-span-3 flex items-center justify-center border-b-2 border-r-2 border-[#1d7044] bg-[#ebdffe] pl-[1px] pt-[3px]">
          section
          <div className="absolute -bottom-[3px] -right-[3px] size-[5px] border-l border-t border-white bg-[#1d7044]" />
        </div>
        <div className="row-span-3 flex items-center justify-center border-b border-r border-[#333] bg-[#e1efd9] pl-[1px] pt-[3px] tracking-[-0.350px]">studentId</div>
        <div className="row-span-3 flex items-center justify-center border-b border-r border-[#333] bg-[#fbe5d6] pl-[1px] pt-[3px] tracking-[-0.350px]">firstName</div>
        <div className="row-span-3 flex items-center justify-center border-b border-r border-[#333] bg-[#f7cbac] pl-[1px] pt-[3px] tracking-[-0.300px]">lastName</div>
        {HEAD.map((r) => r.cells.map((c, i) => (
          <div key={r.bg + i} className={"flex items-center justify-center overflow-hidden border-b border-r border-[#2a2a2a] pl-[1px] pt-[4px] " + r.bg}>{c}</div>
        )))}
      </div>
      {DATA.map((r, ri) => (
        <div key={ri} className={"grid h-[26.250px] whitespace-nowrap " + COLS}>
          <div className={rowHead + " border-b border-r border-[#444] bg-[#161616]"}>{ri + 4}</div>
          <div className="flex items-center justify-end border-b border-r border-b-[#c9c4d2] border-r-[#333] bg-[#ebdffe] pr-[2.500px] pt-[4px]">{r[0]}</div>
          <div className="flex items-center border-b border-r border-b-[#c4cbbf] border-r-[#222] bg-[#e1efd9] pl-[1.500px] pt-[4px]">{r[1]}</div>
          <div className="flex items-center border-b border-r border-b-[#d5c6bc] border-r-[#333] bg-[#fbe5d6] pl-[1.500px] pt-[4px]">Thai Only</div>
          <div className="flex items-center border-b border-b-[#d5c6bc] bg-[#fbe5d6] pl-[2px] pt-[4px]">Thai Only</div>
          <div className="bg-black" />
          {r.slice(2).map((v, i) => (
            <div key={i} className="flex items-center justify-end border-b border-r border-[#dadada] pr-[2px] pt-[4px]">{v}</div>
          ))}
          {[0, 1, 2, 3].map((i) => <div key={i} className="border-b border-r border-[#dadada]" />)}
        </div>
      ))}
      <div className={"grid h-[26.250px] " + COLS}>
        <div className={rowHead + " bg-[#161616]"}>21</div>
        {LETTERS.map((l, i) => <div key={i} className="border-r border-[#dadada]" />)}
      </div>
      <div className="absolute bottom-[3px] left-[22px] h-[9px] w-[343px] rounded-full bg-[#c6c6c6]/90" />
      <div className="absolute right-[3px] top-[21px] h-[529px] w-[6px] rounded-full bg-[#bdbdbd]/80" />
    </div>
  );
}

function SheetTabs() {
  return (
    <div className="flex h-[23px] shrink-0 items-start whitespace-nowrap border-b border-t border-b-[#222] border-t-[#4a4a4a] bg-[#313131] text-[10.500px]">
      <Svg w={27} h={10} className="ml-[13px] mt-[6px]"><path d="M6.500.8v8.400L0 5zM20.500.8v8.400L27 5z" fill="#6a6a6a" /></Svg>
      <div className="ml-[13px] flex h-[19px] w-[71px] items-center justify-center rounded-b-[2px] bg-white pt-[2px] text-[10.300px] font-semibold text-[#1f8550]">Midterm</div>
      <div className="flex h-[21px] w-[69px] items-center justify-center border-r border-[#484848] bg-[#212121] text-[#8e8e8e]">Final</div>
      <div className="flex h-[19px] w-[34px] items-center justify-center border-r border-[#555] pt-[2px]">
        <Svg w={10} h={10}><path d="M5 .5v9M.5 5h9" stroke="#c0c0c0" strokeWidth="1.300" /></Svg>
      </div>
    </div>
  );
}

function StatusBar() {
  return (
    <div className="flex h-[20px] shrink-0 items-center whitespace-nowrap rounded-b-[8px] border-b border-[#6a6a6a] bg-gradient-to-b from-[#474747] to-[#383838] text-[10.300px] text-[#dedede]">
      <span className="ml-[21px] mt-px w-[48px]">Ready</span>
      <Svg w={15} h={14}>
        <circle cx="6" cy="2" r="1.400" stroke={W} />
        <path d="M1 2.500c1.500 2 3 2 3.500 3.200L3.500 10l-1 2.500M11 2.500C9.500 4.500 8 4.500 7.500 5.700l.3 2M3.500 12.800 6 8.500" stroke={W} strokeWidth="1.200" strokeLinecap="round" />
        <path d="m7.500 10.500 2 2.300 4.500-5.300" stroke={W} strokeWidth="1.300" />
      </Svg>
      <span className="ml-[3px] mt-px tracking-[0.04px]">Accessibility: Good to go</span>
      <div className="flex-1" />
      <div className="flex h-full w-[32px] items-center justify-center bg-[#5a5a5a]">
        <Svg w={12} h={12}><path d="M.6.6h10.800v10.800H.6zM.6 4.200h10.800M.6 7.800h10.800M4.200.6v10.800M7.800.6v10.800" stroke="#e8e8e8" /></Svg>
      </div>
      <Svg w={13} h={12} className="ml-[9px]"><path d="M.6.6h11.800v10.800H.6zM3.500 2.600h6v6.800h-6zM5 4.500h3M5 6h3M5 7.500h3" stroke="#dcdcdc" /></Svg>
      <Svg w={13} h={12} className="ml-[18px]"><path d="M.6.6h11.800v10.800H.6zM4.500.6v5M8.500.6v5.500H.6" stroke="#dcdcdc" /></Svg>
      <Svg w={8} h={3} className="ml-[16px]"><path d="M0 1.500h8" stroke="#fff" strokeWidth="1.800" /></Svg>
      <div className="ml-[6px] flex h-[4px] w-[87px] items-center justify-center rounded-full bg-[#6c6c6c]">
        <div className="size-[14px] shrink-0 rounded-full bg-[#a4a4a4]" />
      </div>
      <Svg w={8} h={8} className="ml-[5px]"><path d="M0 4h8M4 0v8" stroke="#fff" strokeWidth="1.600" /></Svg>
      <span className="ml-[15px] mt-px w-[50px] tracking-[0.1px]">100%</span>
    </div>
  );
}

function ExcelWindow() {
  return (
    <div className="absolute left-[4px] top-[7px] flex h-[750px] w-[1273px] flex-col overflow-hidden rounded-[9px] bg-[#272727] shadow-[0_-1px_0_0_#4a4a4a,0_4px_18px_2px_rgba(0,0,0,.8)]">
      <TitleBar />
      <RibbonTabs />
      <Ribbon />
      <FormulaBar />
      <Sheet />
      <SheetTabs />
      <StatusBar />
    </div>
  );
}

/* ---------------- dock ---------------- */

function DockIcon({ bg, dot, children, dotColor = "bg-[#c9b8e6]" }) {
  return (
    <div className="flex w-[28.850px] shrink-0 flex-col items-center">
      <div className={"flex size-[22px] items-center justify-center overflow-hidden rounded-[5px] " + bg}>{children}</div>
      <div className={"mt-[3px] size-[4px] rounded-full " + (dot ? dotColor : "bg-transparent")} />
    </div>
  );
}

const PETALS = [["#f7941d", 0], ["#fbc21b", 45], ["#9acb3c", 90], ["#3fb57d", 135], ["#4a90d9", 180], ["#8a6cc7", 225], ["#d55fa0", 270], ["#ef4a3c", 315]];

function Dock() {
  const peach = "bg-[#f4bfa6]";
  return (
    <div className="absolute left-[379px] top-[762.500px] flex h-[37px] w-[522px] items-start rounded-[8px] border border-white/20 bg-[linear-gradient(90deg,#1b3a78_0%,#2e3e70_8%,#5a4052_16%,#4a4370_25%,#4a4169_40%,#593f68_52%,#74405c_60%,#7b4245_68%,#7f4730_76%,#804438_84%,#74403c_93%,#633b38_100%)] pl-[2px] pt-[5px]">
      <DockIcon bg="bg-[#e6ecf4]" dot>
        <Svg w={22} h={22}>
          <path d="M0 0h12.500C10 5 9.500 8.500 9.500 12h3c0 4 .3 7 1.200 10H0z" fill="#1f9df5" />
          <path d="M0 0h12.500C11 3 10.300 5 10 7H0z" fill="#2cc0fa" />
          <path d="M6 6v2M15.500 6v2" stroke="#14365c" strokeWidth="1.200" /><path d="M4 14c4 4 10 4 14 0" stroke="#14365c" strokeWidth="1.100" />
        </Svg>
      </DockIcon>
      <DockIcon bg="bg-white">
        <Svg w={22} h={22}>{PETALS.map(([c, a]) => <ellipse key={a} cx="11" cy="6.300" rx="2.900" ry="4.200" fill={c} opacity=".85" transform={`rotate(${a} 11 11)`} />)}</Svg>
      </DockIcon>
      <DockIcon bg="bg-black rounded-full"><FaSpotify size={22.5} color="#1ed760" className="shrink-0" /></DockIcon>
      <DockIcon bg="bg-[#6674ee]"><FaDiscord size={16} color="#fff" /></DockIcon>
      <DockIcon bg="bg-[#06c200]">
        <div className="relative flex h-[18px] w-[18px] items-start justify-center">
          <Svg w={18} h={18}><path d="M9 2C4.500 2 1 4.900 1 8.400c0 3.300 2.900 5.800 6.600 6.300.8.2.7.6.5 2.300 3-1.600 8.900-4.600 8.900-8.600C17 4.900 13.500 2 9 2z" fill="#fff" /></Svg>
          <span className="absolute left-0 top-[5px] w-full text-center text-[5px] font-black leading-[7px] text-[#06a800]">LINE</span>
        </div>
      </DockIcon>
      <DockIcon bg="bg-[#b9b4c4]" dot>
        <Svg w={18} h={18}>
          <path d="m3.500 13.500 2-3.500" stroke="#232ea8" strokeWidth="3.400" strokeLinecap="round" />
          <path d="M2.300 6.500c.4 2.600 2.700 4.800 6 5.200" stroke="#232ea8" strokeWidth="2.600" strokeLinecap="round" />
          <path d="M6 9.500 8.800 4.200 13.800 14" stroke="#fb5a6e" strokeWidth="3.200" strokeLinejoin="round" strokeLinecap="round" />
          <path d="M9.500 11.400c3.200-.4 5.500-2.800 6-6.200" stroke="#ff7a86" strokeWidth="2.400" strokeLinecap="round" />
        </Svg>
      </DockIcon>
      <DockIcon bg="bg-[#8fb2e6]">
        <Svg w={22} h={22}>
          <rect width="22" height="22" fill="#dfe6ef" /><rect x="1" y="1" width="20" height="11" fill="#8db0ea" /><rect x="1" y="12" width="20" height="4" fill="#41607c" /><rect x="1" y="16" width="20" height="5" fill="#d9c9b4" />
          <rect x="11.500" y="11" width="9" height="5" rx="1" fill="#1b1d22" /><rect x="11.500" y="15" width="9.500" height="6.500" fill="#e8e8ea" /><path d="M13.500 18.500h5" stroke="#8f9298" />
        </Svg>
      </DockIcon>
      <DockIcon bg="bg-white" dot><VscVscode size={17} color="#1b80cd" /></DockIcon>
      <DockIcon bg="bg-[#1d1d1d]">
        <Svg w={12} h={18}>
          <path d="M3.800 1.500H6v5H3.800a2.500 2.500 0 0 1 0-5z" fill="#f24e1e" /><path d="M6 1.500h2.200a2.500 2.500 0 0 1 0 5H6z" fill="#ff7262" />
          <path d="M3.800 6.500H6v5H3.800a2.500 2.500 0 0 1 0-5z" fill="#a259ff" /><circle cx="8.300" cy="9" r="2.500" fill="#1abcfe" /><path d="M3.800 11.500H6V14a2.400 2.400 0 1 1-2.200-2.500z" fill="#0acf83" />
        </Svg>
      </DockIcon>
      <DockIcon bg="bg-[#141b1e] border border-[#8d8d95] items-start! justify-start!" dot>
        <span className="pl-[3px] pt-[1px] font-['Liberation_Mono',monospace] text-[6.500px] font-bold leading-[9px] text-[#2bbf4a]">$|</span>
      </DockIcon>
      <DockIcon bg="bg-[#c1b4b9]">
        <Svg w={12} h={20}>
          <rect x="1" y=".5" width="10" height="19" rx="1.500" fill="#16262c" /><path d="M2 1.500h6L2 12z" fill="#e8a99b" /><path d="M8 1.500h2V6L2 15v-3z" fill="#d96d5c" /><path d="M10 8v10.500H2V16z" fill="#17607a" /><path d="m2.500 13.500 7-8" stroke="#f3e6df" strokeWidth=".8" />
        </Svg>
      </DockIcon>
      <DockIcon bg="bg-gradient-to-b from-[#c86ee6] to-[#a544cf]">
        <Svg w={14} h={14}><path d="M2.500 1.500h9c1 0 1.500.6 1.500 1.500v6c0 1-.6 1.500-1.500 1.500H7.500L4.700 13v-2.500H2.500C1.500 10.500 1 10 1 9V3c0-.9.6-1.500 1.500-1.500z" fill="#fff" /><path d="M7 3.200v3.600M7 7.800v1.300" stroke="#b052d8" strokeWidth="1.400" /></Svg>
      </DockIcon>
      <div className="ml-[6px] mr-[5px] h-[26px] w-px shrink-0 bg-white/25" />
      <DockIcon bg="bg-gradient-to-b from-[#29a9fb] to-[#1b78f2]" dot dotColor={peach}>
        <Svg w={18} h={20}><path d="M3.500 3.500h11l2 6h-15z" fill="#f3f6fa" /><path d="M9 9.500V18M5.500 18.300h7" stroke="#dfe9f5" strokeWidth="1.500" /><circle cx="8" cy="5.500" r="1.300" fill="#ea5a4a" /><circle cx="10" cy="5.500" r="1.300" fill="#4aa84f" /><circle cx="9" cy="7" r="1.300" fill="#3f78e0" /></Svg>
      </DockIcon>
      <DockIcon bg="bg-white" dot dotColor={peach}>
        <Svg w={18} h={16}>
          <rect x="4.500" y="1" width="13" height="14" rx="1" fill="#21a366" /><path d="M4.500 8H11v7H5.500a1 1 0 0 1-1-1z" fill="#185c37" /><rect x="11" y="8" width="6.500" height="3.500" fill="#107c41" /><rect x="4.500" y="1" width="6.500" height="7" fill="#1b8a50" />
          <rect x="1" y="4" width="8.500" height="8.500" rx=".8" fill="#107c41" /><path d="m3.500 6 3.500 4.500M7 6l-3.500 4.500" stroke="#fff" strokeWidth="1.200" />
        </Svg>
      </DockIcon>
      <DockIcon bg="bg-white" dot dotColor={peach}>
        <Svg w={18} h={18}>
          <circle cx="9" cy="9" r="8" fill="#1273c4" />
          <path d="M1.200 8C2 3.500 5 1 9 1c5 0 8 3.500 8 6.500 0 2.600-2 4-4.500 4-1.500 0-2.300-.6-1.800-1.500C12 8 10.500 5.500 7.500 5.500c-3 0-5.500 1-6.300 2.500z" fill="#35c1a8" />
          <path d="M9 1c5 0 8 3.500 8 6.500 0 2.600-2 4-4.500 4-1.500 0-2.300-.6-1.800-1.500C13 7 10 3 5 2.200 6.300 1.400 7.500 1 9 1z" fill="#5ed15a" opacity=".7" />
          <path d="M10.500 9.800c-.6 1.200.3 3.700 5.700 2.600-1 1.600-2.600 3-4 3.500-3.500.3-5.500-3-3.500-6.500z" fill="#fff" />
          <path d="M6.500 8.500c-1.500 3.500.5 7 4 8.300-5 .9-9-2.800-9.300-7.300C2.500 7 5.500 6.500 6.500 8.500z" fill="#0c59a4" />
        </Svg>
      </DockIcon>
      <DockIcon bg="bg-white" dot dotColor={peach}><SiMongodb size={15} color="#11724a" /></DockIcon>
      <div className="ml-[7px] mr-[8px] h-[26px] w-px shrink-0 bg-[#d18a76]/60" />
      <div className="mt-[-3px]">
        <Svg w={22} h={28}>
          <path d="M1.500 4h19L17.500 26c-3 1.800-10 1.800-13 0z" fill="#65686a" />
          <path d="M4 6l2 19M8 6l1 20M14 6l-1 20M18 6l-2 19" stroke="#85888a" strokeWidth="1.100" />
          <path d="M11 6v20" stroke="#55585a" strokeWidth="2" />
          <ellipse cx="11" cy="4.500" rx="9.500" ry="2.800" fill="#3f4144" stroke="#9fa1a3" />
          <path d="m4 4 3-2 2 2 3-2.500 2 2 3-1 1 2.500-3 1H7z" fill="#d9d6d2" /><circle cx="8" cy="4" r=".9" fill="#c25146" /><circle cx="14.500" cy="4.300" r=".9" fill="#3e7f5b" />
        </Svg>
      </div>
    </div>
  );
}

/* ---------------- screen ---------------- */

function Desktop() {
  return (
    <div className="relative h-[800px] overflow-hidden bg-[#1b1b1b]">
      <div className="absolute inset-x-0 bottom-0 h-[40px]">
        <svg width="1277" height="40" viewBox="0 0 1277 40" className="block">
          <defs>
            <linearGradient id="wl" x1="0" x2="1"><stop offset="0" stopColor="#0640ac" /><stop offset=".5" stopColor="#063fae" /><stop offset="1" stopColor="#0645b0" /></linearGradient>
            <linearGradient id="wr" x1="0" x2="1"><stop offset="0" stopColor="#5474bf" /><stop offset=".2" stopColor="#3a73c6" /><stop offset=".62" stopColor="#1b70c8" /><stop offset=".68" stopColor="#4a73c2" /><stop offset=".8" stopColor="#2f74cb" /><stop offset="1" stopColor="#3474c8" /></linearGradient>
            <linearGradient id="sh" x1="0" y1="0" x2="0" y2="1"><stop offset="0" stopColor="#05070d" stopOpacity=".9" /><stop offset=".4" stopColor="#05070d" stopOpacity=".4" /><stop offset="1" stopColor="#05070d" stopOpacity="0" /></linearGradient>
          </defs>
          <rect width="520" height="40" fill="url(#wl)" />
          <path d="M0 0h24L0 33z" fill="#1a5fa4" />
          <path d="M520 0h430v40H520z" fill="#d57c60" />
          <path d="M880 0h35l12 40h-47z" fill="#da7b63" />
          <path d="M915 0h40l14 40h-42z" fill="#a673b4" />
          <path d="M955 0h290l24 40H969z" fill="url(#wr)" />
          <path d="M1240 0h37v40h-13z" fill="#8170bb" />
          <rect width="1277" height="40" fill="url(#sh)" />
        </svg>
      </div>
      {/* windows behind the spreadsheet */}
      <div className="absolute left-0 top-0 h-[762px] w-full rounded-b-[6px] border-b border-[#3a3a3a] bg-[#131313] shadow-[0_3px_8px_rgba(0,0,0,.7)]">
        <div className="h-px w-[240px] bg-[#1f4687]" />
      </div>
      <div className="absolute left-0 top-[744px] h-[18px] w-[27px] rounded-bl-[6px] bg-[#0b5c9f]" />
      <div className="absolute left-0 top-[144px] h-px w-[4px] bg-[#999]" />
      <div className="absolute left-[1px] top-[51px] h-px w-[3px] bg-[#999]" />
      <ExcelWindow />
      <Dock />
    </div>
  );
}

export default function App() {
  return (
    <div className="flex h-[954px] w-[1558px] flex-col overflow-hidden bg-white font-['Inter',sans-serif]">
      <div className="ml-[122px] mt-[2px] flex h-[896px] w-[1315px] shrink-0 flex-col rounded-t-[34px] border-x border-t border-x-[#4c4d4f] border-t-[#77787a] bg-[#151617] p-[5px] pb-0">
        <div className="flex h-full flex-col rounded-t-[28px] rounded-b-[8px] bg-black px-[12px] pt-[15px]">
          <div className="relative w-[1277px] overflow-hidden rounded-t-[10px]">
            <MenuBar />
            <Desktop />
            <div className="absolute left-[571px] top-0 h-[21px] w-[136px] rounded-b-[8px] bg-black">
              <div className="absolute left-[66px] top-[3px] size-[3px] rounded-full bg-[#0c1a33]" />
            </div>
          </div>
          <div className="-mx-[12px] mt-[13px] flex-1 rounded-b-[8px] bg-gradient-to-b from-[#090909] to-[#030303]" />
        </div>
      </div>
      <div className="mx-[1px] flex h-[53.500px] shrink-0 flex-col items-center rounded-b-[30px] border-t border-[#4a4a4c] bg-[linear-gradient(90deg,rgba(0,0,0,.7)_0,rgba(80,80,82,.5)_1%,rgba(0,0,0,.6)_2%,rgba(0,0,0,.5)_10%,rgba(0,0,0,0)_35%,rgba(0,0,0,0)_80%,rgba(0,0,0,.4)_97%,rgba(110,110,112,.55)_98.300%,rgba(0,0,0,.6)_99.500%),linear-gradient(180deg,#29292b_0%,#242427_30%,#18181b_55%,#08080a_75%,#151517_92%,#050505_100%)]">
        <div className="h-[17px] w-[239px] rounded-b-[14px] bg-[linear-gradient(90deg,#0a0a0a_0%,#3b3b3d_5%,transparent_10%,transparent_90%,#3b3b3d_95%,#0a0a0a_100%),linear-gradient(180deg,#454547,#363638)]" />
      </div>
      <div className="flex h-[2px] shrink-0 justify-between pl-[74px] pr-[77px]">
        <div className="w-[91px] bg-[#0d0d0d]" />
        <div className="w-[92px] bg-[#0d0d0d]" />
      </div>
    </div>
  );
}
